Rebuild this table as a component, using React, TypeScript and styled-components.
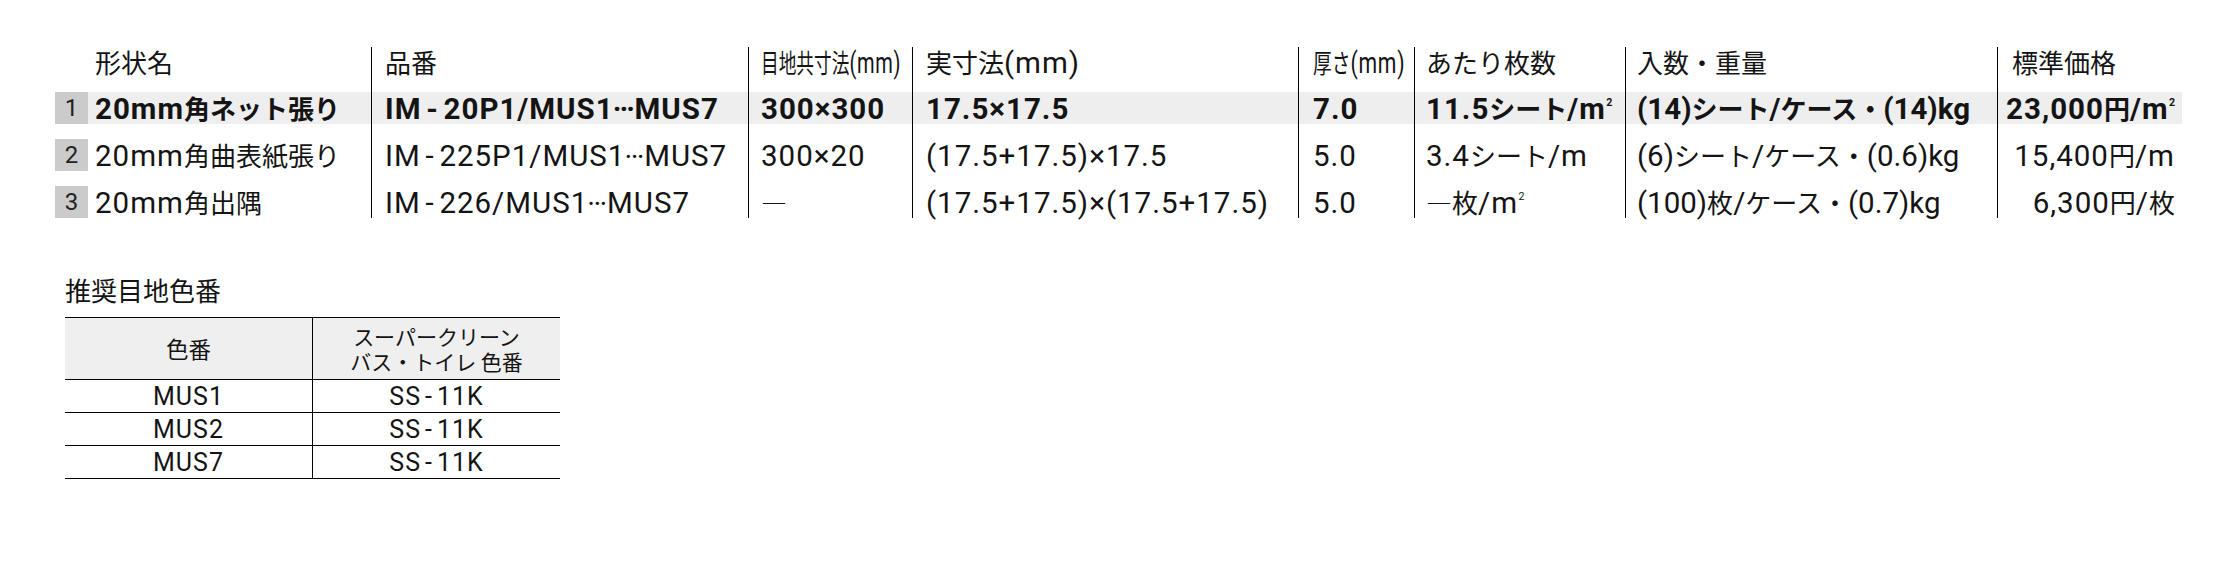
import React from "react";
import styled, { createGlobalStyle } from "styled-components";

const GlobalStyle = createGlobalStyle`
  html, body { margin: 0; padding: 0; background: #ffffff; }
  body {
    font-family: "Noto Sans CJK JP", "Noto Sans", sans-serif;
    color: #141414;
  }
`;

const CJK_SPLIT = /([\u3000-\u30ff\u3400-\u9fff\uff00-\uffef\u2014\u2015]+)/;
const CJK_ONLY = /^[\u3000-\u30ff\u3400-\u9fff\uff00-\uffef\u2014\u2015]+$/;

const Cjk = styled.span`
  font-family: "Noto Sans CJK JP", sans-serif;
`;

const Latin = styled.span<{ $size: number; $ls: number }>`
  font-family: Roboto, "Liberation Sans", sans-serif;
  font-size: ${(p) => p.$size}px;
  letter-spacing: ${(p) => p.$ls}px;
`;

const Hy = styled.span`
  margin: 0 0.16em;
`;

const Ell = styled.span`
  display: inline-block;
  line-height: 0;
  vertical-align: 0.27em;
  letter-spacing: -1px;
  margin: 0 1px 0 -1px;
`;

const Sup = styled.span`
  font-size: 0.36em;
  line-height: 0;
  vertical-align: 13px;
  letter-spacing: 0;
  margin-left: 0.04em;
`;

const Squeeze = styled.span<{ $sx: number }>`
  display: inline-block;
  transform: scaleX(${(p) => p.$sx});
  transform-origin: left center;
`;

function latinParts(s: string) {
  const out: React.ReactNode[] = [];
  let buf = "";
  const flush = () => {
    if (buf) out.push(buf);
    buf = "";
  };
  Array.from(s).forEach((ch, i) => {
    if (ch === "-") {
      flush();
      out.push(<Hy key={"h" + i}>-</Hy>);
    } else if (ch === "\u2026") {
      flush();
      out.push(<Ell key={"e" + i}>…</Ell>);
    } else if (ch === "\u33a1") {
      flush();
      out.push(
        <React.Fragment key={"m" + i}>
          m<Sup>2</Sup>
        </React.Fragment>
      );
    } else {
      buf += ch;
    }
  });
  flush();
  return out;
}

function Rich({ text, size = 29.5, ls = 1 }: { text: string; size?: number; ls?: number }) {
  const parts = text.split(CJK_SPLIT);
  return (
    <>
      {parts.map((p, i) => {
        if (!p) return null;
        if (CJK_ONLY.test(p)) return <Cjk key={i}>{p}</Cjk>;
        return (
          <Latin key={i} $size={size} $ls={ls}>
            {latinParts(p)}
          </Latin>
        );
      })}
    </>
  );
}

/* ---------- spec table ---------- */

const Page = styled.div`
  padding: 47px 40px 40px 55px;
  box-sizing: border-box;
  min-height: 564px;
`;

const SpecTable = styled.div`
  width: 2127px;
`;

const Row = styled.div`
  display: grid;
  grid-template-columns: 33px 283px 377px 164px 386px 116px 211px 372px 185px;
`;

const Cell = styled.div<{ $line: boolean; $gap: number }>`
  min-width: 0;
  border-left: ${(p) => (p.$line ? "1px solid #000" : "none")};
  padding-bottom: ${(p) => p.$gap}px;
`;

const CellBody = styled.div<{
  $h: number;
  $hl?: boolean;
  $bold?: boolean;
  $pl: number;
  $pr: number;
  $right?: boolean;
}>`
  height: ${(p) => p.$h}px;
  line-height: ${(p) => p.$h}px;
  display: flex;
  align-items: center;
  justify-content: ${(p) => (p.$right ? "flex-end" : "flex-start")};
  padding: 0 ${(p) => p.$pr}px 0 ${(p) => p.$pl}px;
  background: ${(p) => (p.$hl ? "#eeeeee" : "transparent")};
  font-weight: ${(p) => (p.$bold ? 700 : 400)};
  font-size: 26px;
  white-space: nowrap;
`;

const Line = styled.span`
  display: block;
`;

const NumBox = styled.div`
  height: 32px;
  background: #cbcbcb;
  display: flex;
  align-items: center;
  justify-content: center;
  font-family: Roboto, "Liberation Sans", sans-serif;
  font-size: 24px;
  color: #222;
`;

/* ---------- colour table ---------- */

const Section = styled.section`
  margin: 57px 0 0 10px;
`;

const Title = styled.h2`
  margin: 0 0 12px;
  font-size: 26px;
  font-weight: 400;
  line-height: 30px;
`;

const ColorTable = styled.div`
  width: 495px;
  border-top: 1px solid #000;
`;

const CRow = styled.div<{ $head?: boolean }>`
  display: grid;
  grid-template-columns: 247px 248px;
  height: ${(p) => (p.$head ? 61 : 32)}px;
  border-bottom: 1px solid #000;
  background: ${(p) => (p.$head ? "#efefef" : "transparent")};
`;

const CCell = styled.div<{ $line?: boolean; $fs?: number }>`
  display: flex;
  flex-direction: column;
  align-items: center;
  justify-content: center;
  text-align: center;
  border-left: ${(p) => (p.$line ? "1px solid #000" : "none")};
  font-size: ${(p) => p.$fs ?? 21}px;
  line-height: 25px;
  white-space: nowrap;
`;

type HeadItem = string | { text: string; sx: number };

const headers: HeadItem[] = [
  "形状名",
  "品番",
  { text: "目地共寸法(mm)", sx: 0.68 },
  "実寸法(mm)",
  { text: "厚さ(mm)", sx: 0.72 },
  "あたり枚数",
  "入数・重量",
  "標準価格",
];

const rows = [
  {
    no: "1",
    hl: true,
    cells: [
      "20mm角ネット張り",
      "IM-20P1/MUS1…MUS7",
      "300×300",
      "17.5×17.5",
      "7.0",
      "11.5シート/\u33a1",
      "(14)シート/ケース・(14)kg",
      "23,000円/\u33a1",
    ],
  },
  {
    no: "2",
    hl: false,
    cells: [
      "20mm角曲表紙張り",
      "IM-225P1/MUS1…MUS7",
      "300×20",
      "(17.5+17.5)×17.5",
      "5.0",
      "3.4シート/m",
      "(6)シート/ケース・(0.6)kg",
      "15,400円/m",
    ],
  },
  {
    no: "3",
    hl: false,
    cells: [
      "20mm角出隅",
      "IM-226/MUS1…MUS7",
      "\u2015",
      "(17.5+17.5)×(17.5+17.5)",
      "5.0",
      "\u2015枚/\u33a1",
      "(100)枚/ケース・(0.7)kg",
      "6,300円/枚",
    ],
  },
];

const padLeft = [7, 13, 12, 13, 14, 11, 11, 14];
const spacing = [1, 1, 1, 1, 1, 1, 0, 1];

const colors = [
  { no: "MUS1", code: "SS-11K" },
  { no: "MUS2", code: "SS-11K" },
  { no: "MUS7", code: "SS-11K" },
];

export default function App() {
  return (
    <>
      <GlobalStyle />
      <Page>
        <SpecTable>
          <Row>
            <Cell $line={false} $gap={15} />
            {headers.map((h, i) => (
              <Cell key={i} $line={i > 0} $gap={15}>
                <CellBody $h={30} $pl={padLeft[i]} $pr={0}>
                  <Line>
                    {typeof h === "string" ? (
                      <Rich text={h} />
                    ) : (
                      <Squeeze $sx={h.sx}>
                        <Rich text={h.text} />
                      </Squeeze>
                    )}
                  </Line>
                </CellBody>
              </Cell>
            ))}
          </Row>
          {rows.map((r, ri) => (
            <Row key={r.no}>
              <Cell $line={false} $gap={ri < rows.length - 1 ? 15 : 0}>
                <NumBox>{r.no}</NumBox>
              </Cell>
              {r.cells.map((c, ci) => (
                <Cell key={ci} $line={ci > 0} $gap={ri < rows.length - 1 ? 15 : 0}>
                  <CellBody
                    $h={32}
                    $hl={r.hl}
                    $bold={r.hl}
                    $pl={ci === 7 ? 0 : padLeft[ci]}
                    $pr={ci === 7 ? 7 : 0}
                    $right={ci === 7}
                  >
                    <Line>
                      <Rich text={c} ls={spacing[ci]} />
                    </Line>
                  </CellBody>
                </Cell>
              ))}
            </Row>
          ))}
        </SpecTable>

        <Section>
          <Title>推奨目地色番</Title>
          <ColorTable>
            <CRow $head>
              <CCell $fs={22.5}>色番</CCell>
              <CCell $line>
                <span>スーパークリーン</span>
                <span>バス・トイレ 色番</span>
              </CCell>
            </CRow>
            {colors.map((c) => (
              <CRow key={c.no}>
                <CCell>
                  <Rich text={c.no} size={25} ls={1} />
                </CCell>
                <CCell $line>
                  <Rich text={c.code} size={25} ls={1} />
                </CCell>
              </CRow>
            ))}
          </ColorTable>
        </Section>
      </Page>
    </>
  );
}
